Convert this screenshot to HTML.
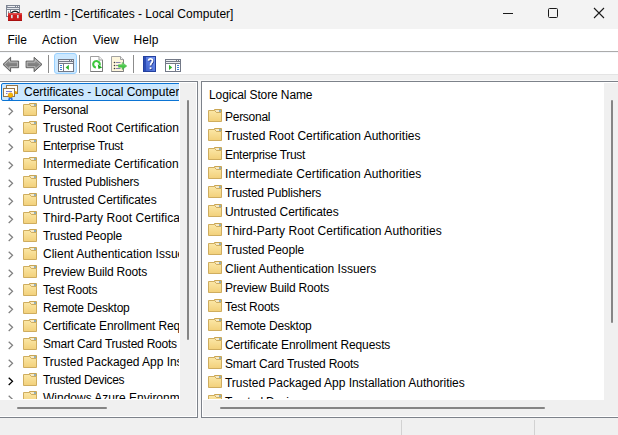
<!DOCTYPE html><html><head><meta charset="utf-8"><style>
*{box-sizing:border-box;margin:0;padding:0}
html,body{width:618px;height:435px;overflow:hidden;background:#f0f0f0;font-family:"Liberation Sans",sans-serif;font-size:12px;color:#000}
.a{position:absolute}
.t{position:absolute;white-space:nowrap;line-height:16px;height:16px}
svg{display:block}
</style></head><body>

<div class="a" style="left:0;top:0;width:618px;height:29px;background:#f3f3f3"></div>
<svg class="a" style="left:5px;top:4px" width="18" height="18" viewBox="0 0 18 18">
<rect x="1.5" y="1.5" width="13" height="11" fill="#fff" stroke="#7d8593"/>
<rect x="2" y="2" width="12" height="4" fill="#7d8593"/>
<path d="M2.5 2.5h7.5M11 2.5h1M13 2.5h1" stroke="#eef0f4" stroke-width="1"/>
<path d="M2 4.5h12" stroke="#e4e7ec" stroke-width="1"/>
<rect x="5" y="5" width="1" height="7" fill="#7d8593"/>
<rect x="3" y="7.5" width="1.2" height="1.2" fill="#555"/>
<path d="M6.2 9 Q10 5.6 13.8 9" fill="none" stroke="#1e1e1e" stroke-width="1.5"/>
<rect x="3" y="9" width="14" height="8" rx="0.6" fill="#cc1c1c"/>
<rect x="3" y="9" width="14" height="1.6" fill="#e14b4b"/>
<rect x="3" y="16" width="14" height="1" fill="#a81010"/>
<rect x="6" y="11" width="1.7" height="3.2" fill="#d5dde0"/><rect x="12" y="11" width="1.7" height="3.2" fill="#d5dde0"/>
</svg>
<div class="t" style="left:28px;top:6px">certlm - [Certificates - Local Computer]</div>
<div class="a" style="left:503px;top:13px;width:10px;height:1px;background:#1a1a1a"></div>
<div class="a" style="left:548px;top:8px;width:10px;height:10px;border:1px solid #1a1a1a;border-radius:1.5px"></div>
<svg class="a" style="left:593px;top:7px" width="12" height="12" viewBox="0 0 12 12"><path d="M1 1L11 11M11 1L1 11" stroke="#1a1a1a" stroke-width="1.1"/></svg>
<div class="a" style="left:0;top:29px;width:618px;height:22px;background:#fff"></div>
<div class="a" style="left:0;top:51px;width:618px;height:1px;background:#ababab"></div>
<div class="t" style="left:7.5px;top:32px;letter-spacing:0px">File</div>
<div class="t" style="left:42px;top:32px;letter-spacing:0.3px">Action</div>
<div class="t" style="left:93px;top:32px;letter-spacing:0px">View</div>
<div class="t" style="left:133.5px;top:32px;letter-spacing:0.1px">Help</div>
<div class="a" style="left:0;top:52px;width:618px;height:22px;background:#fff"></div>
<svg class="a" style="left:2px;top:56px" width="18" height="17" viewBox="0 0 18 17"><defs><linearGradient id="ag" x1="0" y1="0" x2="0" y2="1"><stop offset="0" stop-color="#a8a8a8"/><stop offset="0.55" stop-color="#7c7c7c"/><stop offset="1" stop-color="#a0a0a0"/></linearGradient></defs>
<path d="M1 8.4L8.6 1.3V5.1H16.6V11.7H8.6V15.7Z" fill="url(#ag)" stroke="#5f5f5f" stroke-width="1" stroke-linejoin="round"/><path d="M2.6 8.4L7.6 3.7V6.1H15.6V10.7H7.6V13.2Z" fill="none" stroke="#cfcfcf" stroke-width="0.7" stroke-linejoin="round"/></svg>
<svg class="a" style="left:25px;top:56px" width="18" height="17" viewBox="0 0 18 17">
<path d="M17 8.4L9.1 1.3V5.1H1.1V11.7H9.1V15.7Z" fill="url(#ag)" stroke="#5f5f5f" stroke-width="1" stroke-linejoin="round"/><path d="M15.4 8.4L10.1 3.7V6.1H2.1V10.7H10.1V13.2Z" fill="none" stroke="#cfcfcf" stroke-width="0.7" stroke-linejoin="round"/></svg>
<div class="a" style="left:48px;top:55px;width:1px;height:18px;background:#8c8c8c"></div>
<div class="a" style="left:79px;top:55px;width:1px;height:18px;background:#8c8c8c"></div>
<div class="a" style="left:133px;top:55px;width:1px;height:18px;background:#8c8c8c"></div>
<div class="a" style="left:54px;top:53px;width:23px;height:21px;background:#cce8ff;border:1px solid #99d1ff;border-radius:3px"></div>
<svg class="a" style="left:58px;top:59px" width="16" height="13" viewBox="0 0 16 13">
<rect x="0" y="0" width="16" height="13" fill="#737987"/>
<rect x="1" y="5" width="14" height="7" fill="#fff"/>
<path d="M1 1.5h10M12 1.5h1M14 1.5h1" stroke="#eceef2" stroke-width="1"/>
<path d="M1 3.5h14" stroke="#eceef2" stroke-width="1"/>
<rect x="5" y="5" width="1" height="7" fill="#737987"/>
<path d="M2 6.5h2M2 8.5h2M2 10.5h2" stroke="#3b7fd6" stroke-width="1"/>
<path d="M7.6 8.4L10.9 5.8V11Z" fill="#2fb52f"/>
</svg>
<svg class="a" style="left:165px;top:59px" width="16" height="13" viewBox="0 0 16 13">
<rect x="0" y="0" width="16" height="13" fill="#737987"/>
<rect x="1" y="5" width="14" height="7" fill="#fff"/>
<path d="M1 1.5h10M12 1.5h1M14 1.5h1" stroke="#eceef2" stroke-width="1"/>
<path d="M1 3.5h14" stroke="#eceef2" stroke-width="1"/>
<rect x="10" y="5" width="1" height="7" fill="#737987"/>
<path d="M12 6.5h2M12 8.5h2M12 10.5h2" stroke="#3b7fd6" stroke-width="1"/>
<path d="M7.2 8.4L4 5.8V11Z" fill="#2fb52f"/>
</svg>
<svg class="a" style="left:90px;top:56px" width="14" height="16" viewBox="0 0 14 16">
<path d="M0.5 0.5H9L12.5 4V15.5H0.5Z" fill="#fff" stroke="#a0a0a0"/><path d="M0.5 15.5H12.5V4" fill="none" stroke="#7a7a7a"/><path d="M9 0.5V4H12.5" fill="#f2f2f2" stroke="#a0a0a0"/>
<path d="M5.9 11.55A3.3 3.3 0 1 1 9.6 9.4" fill="none" stroke="#3cc83c" stroke-width="2.1"/>
<path d="M7.8 8.6L12.2 11.4L8.5 13Z" fill="#1aa81a"/>
</svg>
<svg class="a" style="left:111px;top:56px" width="17" height="16" viewBox="0 0 17 16"><defs><linearGradient id="eg" x1="0" y1="0" x2="0" y2="1"><stop offset="0" stop-color="#8ee88e"/><stop offset="0.5" stop-color="#49c949"/><stop offset="1" stop-color="#3cb83c"/></linearGradient></defs>
<path d="M0.5 0.5H9.5L12.5 3.5V15.5H0.5Z" fill="#fdf6dc" stroke="#a3a3a3"/><path d="M0.5 15.5H12.5V3.5" fill="none" stroke="#808080"/><path d="M9.5 0.5V3.5H12.5" fill="#f0f0f0" stroke="#a3a3a3"/>
<circle cx="3.5" cy="6.5" r="0.8" fill="#3a3a3a"/><circle cx="3.5" cy="9.5" r="0.8" fill="#3a3a3a"/><circle cx="3.5" cy="12.5" r="0.8" fill="#3a3a3a"/>
<path d="M5 6.5h4.5M5 9.5h4.5M5 12.5h4.5" stroke="#8585ad" stroke-width="1"/>
<path d="M7.5 8.7H11.2V6.4L15.8 10L11.2 13.6V11.3H7.5Z" fill="url(#eg)" stroke="#43b043" stroke-width="0.5"/>
</svg>
<svg class="a" style="left:143px;top:56px" width="13" height="16" viewBox="0 0 13 16"><defs><linearGradient id="hg" x1="1" y1="0" x2="0" y2="1"><stop offset="0" stop-color="#7495f0"/><stop offset="1" stop-color="#3e60cc"/></linearGradient></defs>
<rect x="0" y="0" width="13" height="16" fill="#23409e"/>
<rect x="3" y="1" width="9" height="14" fill="url(#hg)"/>
<rect x="1" y="1" width="2" height="14" fill="#2c4cb4"/>
<path d="M5.6 4.8Q5.7 2.9 7.6 2.9Q9.6 2.9 9.6 4.7Q9.6 5.9 8.5 6.8Q7.6 7.6 7.6 9.6" fill="none" stroke="#1c2f80" stroke-width="1.9" transform="translate(0.6,0.6)"/><rect x="7.3" y="11.9" width="1.9" height="1.9" fill="#1c2f80"/><path d="M5.6 4.8Q5.7 2.9 7.6 2.9Q9.6 2.9 9.6 4.7Q9.6 5.9 8.5 6.8Q7.6 7.6 7.6 9.6" fill="none" stroke="#fff" stroke-width="1.8"/><rect x="6.7" y="11.3" width="1.8" height="1.8" fill="#fff"/>
</svg>
<div class="a" style="left:0;top:52px;width:618px;height:1px;background:#f4f7fb"></div>
<div class="a" style="left:0;top:74px;width:618px;height:1px;background:#e4e4e4"></div>
<div class="a" style="left:0;top:80px;width:618px;height:1px;background:#f9f9f9"></div>
<div class="a" style="left:-1px;top:81px;width:199px;height:337px;border:1px solid #7d828a;background:#fff"></div>
<div class="a" style="left:201px;top:81px;width:430px;height:337px;border:1px solid #7d828a;background:#fff"></div>
<div class="a" style="left:198px;top:81px;width:3px;height:337px;background:#f5f5f5"></div>
<div class="a" style="left:1px;top:83px;width:178px;height:316px;overflow:hidden;background:#fff">
<div class="a" style="left:0;top:0;width:240px;height:18px;background:#cce8ff;border:1px solid #0b74d4;border-radius:2px"></div>
<svg class="a" style="left:2px;top:1px" width="17" height="17" viewBox="0 0 17 17">
<rect x="3.5" y="1.5" width="11" height="8" fill="#fffdf7" stroke="#957549"/>
<circle cx="12.5" cy="8.5" r="1.6" fill="#f0a800"/>
<rect x="0.5" y="4.5" width="11" height="8" fill="#fffdf7" stroke="#957549"/>
<path d="M3 7.5h6M3 9.5h1.5" stroke="#7b7bd0" stroke-width="1"/>
<path d="M6 12.5L5.2 16H6.8L7.5 14.5L8.2 16H9.8L9 12.5Z" fill="#2a6ae0"/>
<circle cx="7.5" cy="11.2" r="2.3" fill="#f5b800" stroke="#e08c00" stroke-width="0.7"/>
</svg>
<div class="t" style="left:23px;top:1px">Certificates - Local Computer</div>
<div class="a" style="left:6px;top:23px"><svg width="8" height="11" viewBox="0 0 8 11"><path d="M1.7 1.7L5.5 5.35L1.7 9" fill="none" stroke="#808080" stroke-width="1.3"/></svg></div>
<div class="a" style="left:22px;top:20px"><svg width="15" height="14" viewBox="0 0 15 14"><defs><linearGradient id="fgt0" x1="0" y1="0" x2="0" y2="1"><stop offset="0" stop-color="#fbe7a6"/><stop offset="1" stop-color="#f2d07a"/></linearGradient></defs><path d="M6.5 0.5h7v3h-7z" fill="#efd58f" stroke="#c9a552"/><path d="M7.5 1.5h3.5v1h-3.5z" fill="#fff"/><path d="M11 1.5h2v1h-2z" fill="#3b8be0"/><path d="M0.5 1.5h6l2 2h5v9h-13z" fill="url(#fgt0)" stroke="#cfad5f"/></svg></div>
<div class="t" style="left:42px;top:19px;letter-spacing:-0.271px">Personal</div>
<div class="a" style="left:6px;top:41px"><svg width="8" height="11" viewBox="0 0 8 11"><path d="M1.7 1.7L5.5 5.35L1.7 9" fill="none" stroke="#808080" stroke-width="1.3"/></svg></div>
<div class="a" style="left:22px;top:38px"><svg width="15" height="14" viewBox="0 0 15 14"><defs><linearGradient id="fgt1" x1="0" y1="0" x2="0" y2="1"><stop offset="0" stop-color="#fbe7a6"/><stop offset="1" stop-color="#f2d07a"/></linearGradient></defs><path d="M6.5 0.5h7v3h-7z" fill="#efd58f" stroke="#c9a552"/><path d="M7.5 1.5h3.5v1h-3.5z" fill="#fff"/><path d="M11 1.5h2v1h-2z" fill="#3b8be0"/><path d="M0.5 1.5h6l2 2h5v9h-13z" fill="url(#fgt1)" stroke="#cfad5f"/></svg></div>
<div class="t" style="left:42px;top:37px;letter-spacing:0.014px">Trusted Root Certification Authorities</div>
<div class="a" style="left:6px;top:59px"><svg width="8" height="11" viewBox="0 0 8 11"><path d="M1.7 1.7L5.5 5.35L1.7 9" fill="none" stroke="#808080" stroke-width="1.3"/></svg></div>
<div class="a" style="left:22px;top:56px"><svg width="15" height="14" viewBox="0 0 15 14"><defs><linearGradient id="fgt2" x1="0" y1="0" x2="0" y2="1"><stop offset="0" stop-color="#fbe7a6"/><stop offset="1" stop-color="#f2d07a"/></linearGradient></defs><path d="M6.5 0.5h7v3h-7z" fill="#efd58f" stroke="#c9a552"/><path d="M7.5 1.5h3.5v1h-3.5z" fill="#fff"/><path d="M11 1.5h2v1h-2z" fill="#3b8be0"/><path d="M0.5 1.5h6l2 2h5v9h-13z" fill="url(#fgt2)" stroke="#cfad5f"/></svg></div>
<div class="t" style="left:42px;top:55px;letter-spacing:-0.287px">Enterprise Trust</div>
<div class="a" style="left:6px;top:77px"><svg width="8" height="11" viewBox="0 0 8 11"><path d="M1.7 1.7L5.5 5.35L1.7 9" fill="none" stroke="#808080" stroke-width="1.3"/></svg></div>
<div class="a" style="left:22px;top:74px"><svg width="15" height="14" viewBox="0 0 15 14"><defs><linearGradient id="fgt3" x1="0" y1="0" x2="0" y2="1"><stop offset="0" stop-color="#fbe7a6"/><stop offset="1" stop-color="#f2d07a"/></linearGradient></defs><path d="M6.5 0.5h7v3h-7z" fill="#efd58f" stroke="#c9a552"/><path d="M7.5 1.5h3.5v1h-3.5z" fill="#fff"/><path d="M11 1.5h2v1h-2z" fill="#3b8be0"/><path d="M0.5 1.5h6l2 2h5v9h-13z" fill="url(#fgt3)" stroke="#cfad5f"/></svg></div>
<div class="t" style="left:42px;top:73px;letter-spacing:0.095px">Intermediate Certification Authorities</div>
<div class="a" style="left:6px;top:95px"><svg width="8" height="11" viewBox="0 0 8 11"><path d="M1.7 1.7L5.5 5.35L1.7 9" fill="none" stroke="#808080" stroke-width="1.3"/></svg></div>
<div class="a" style="left:22px;top:92px"><svg width="15" height="14" viewBox="0 0 15 14"><defs><linearGradient id="fgt4" x1="0" y1="0" x2="0" y2="1"><stop offset="0" stop-color="#fbe7a6"/><stop offset="1" stop-color="#f2d07a"/></linearGradient></defs><path d="M6.5 0.5h7v3h-7z" fill="#efd58f" stroke="#c9a552"/><path d="M7.5 1.5h3.5v1h-3.5z" fill="#fff"/><path d="M11 1.5h2v1h-2z" fill="#3b8be0"/><path d="M0.5 1.5h6l2 2h5v9h-13z" fill="url(#fgt4)" stroke="#cfad5f"/></svg></div>
<div class="t" style="left:42px;top:91px;letter-spacing:-0.2px">Trusted Publishers</div>
<div class="a" style="left:6px;top:113px"><svg width="8" height="11" viewBox="0 0 8 11"><path d="M1.7 1.7L5.5 5.35L1.7 9" fill="none" stroke="#808080" stroke-width="1.3"/></svg></div>
<div class="a" style="left:22px;top:110px"><svg width="15" height="14" viewBox="0 0 15 14"><defs><linearGradient id="fgt5" x1="0" y1="0" x2="0" y2="1"><stop offset="0" stop-color="#fbe7a6"/><stop offset="1" stop-color="#f2d07a"/></linearGradient></defs><path d="M6.5 0.5h7v3h-7z" fill="#efd58f" stroke="#c9a552"/><path d="M7.5 1.5h3.5v1h-3.5z" fill="#fff"/><path d="M11 1.5h2v1h-2z" fill="#3b8be0"/><path d="M0.5 1.5h6l2 2h5v9h-13z" fill="url(#fgt5)" stroke="#cfad5f"/></svg></div>
<div class="t" style="left:42px;top:109px;letter-spacing:-0.081px">Untrusted Certificates</div>
<div class="a" style="left:6px;top:131px"><svg width="8" height="11" viewBox="0 0 8 11"><path d="M1.7 1.7L5.5 5.35L1.7 9" fill="none" stroke="#808080" stroke-width="1.3"/></svg></div>
<div class="a" style="left:22px;top:128px"><svg width="15" height="14" viewBox="0 0 15 14"><defs><linearGradient id="fgt6" x1="0" y1="0" x2="0" y2="1"><stop offset="0" stop-color="#fbe7a6"/><stop offset="1" stop-color="#f2d07a"/></linearGradient></defs><path d="M6.5 0.5h7v3h-7z" fill="#efd58f" stroke="#c9a552"/><path d="M7.5 1.5h3.5v1h-3.5z" fill="#fff"/><path d="M11 1.5h2v1h-2z" fill="#3b8be0"/><path d="M0.5 1.5h6l2 2h5v9h-13z" fill="url(#fgt6)" stroke="#cfad5f"/></svg></div>
<div class="t" style="left:42px;top:127px;letter-spacing:0.063px">Third-Party Root Certification Authorities</div>
<div class="a" style="left:6px;top:149px"><svg width="8" height="11" viewBox="0 0 8 11"><path d="M1.7 1.7L5.5 5.35L1.7 9" fill="none" stroke="#808080" stroke-width="1.3"/></svg></div>
<div class="a" style="left:22px;top:146px"><svg width="15" height="14" viewBox="0 0 15 14"><defs><linearGradient id="fgt7" x1="0" y1="0" x2="0" y2="1"><stop offset="0" stop-color="#fbe7a6"/><stop offset="1" stop-color="#f2d07a"/></linearGradient></defs><path d="M6.5 0.5h7v3h-7z" fill="#efd58f" stroke="#c9a552"/><path d="M7.5 1.5h3.5v1h-3.5z" fill="#fff"/><path d="M11 1.5h2v1h-2z" fill="#3b8be0"/><path d="M0.5 1.5h6l2 2h5v9h-13z" fill="url(#fgt7)" stroke="#cfad5f"/></svg></div>
<div class="t" style="left:42px;top:145px;letter-spacing:-0.138px">Trusted People</div>
<div class="a" style="left:6px;top:167px"><svg width="8" height="11" viewBox="0 0 8 11"><path d="M1.7 1.7L5.5 5.35L1.7 9" fill="none" stroke="#808080" stroke-width="1.3"/></svg></div>
<div class="a" style="left:22px;top:164px"><svg width="15" height="14" viewBox="0 0 15 14"><defs><linearGradient id="fgt8" x1="0" y1="0" x2="0" y2="1"><stop offset="0" stop-color="#fbe7a6"/><stop offset="1" stop-color="#f2d07a"/></linearGradient></defs><path d="M6.5 0.5h7v3h-7z" fill="#efd58f" stroke="#c9a552"/><path d="M7.5 1.5h3.5v1h-3.5z" fill="#fff"/><path d="M11 1.5h2v1h-2z" fill="#3b8be0"/><path d="M0.5 1.5h6l2 2h5v9h-13z" fill="url(#fgt8)" stroke="#cfad5f"/></svg></div>
<div class="t" style="left:42px;top:163px;letter-spacing:-0.007px">Client Authentication Issuers</div>
<div class="a" style="left:6px;top:185px"><svg width="8" height="11" viewBox="0 0 8 11"><path d="M1.7 1.7L5.5 5.35L1.7 9" fill="none" stroke="#808080" stroke-width="1.3"/></svg></div>
<div class="a" style="left:22px;top:182px"><svg width="15" height="14" viewBox="0 0 15 14"><defs><linearGradient id="fgt9" x1="0" y1="0" x2="0" y2="1"><stop offset="0" stop-color="#fbe7a6"/><stop offset="1" stop-color="#f2d07a"/></linearGradient></defs><path d="M6.5 0.5h7v3h-7z" fill="#efd58f" stroke="#c9a552"/><path d="M7.5 1.5h3.5v1h-3.5z" fill="#fff"/><path d="M11 1.5h2v1h-2z" fill="#3b8be0"/><path d="M0.5 1.5h6l2 2h5v9h-13z" fill="url(#fgt9)" stroke="#cfad5f"/></svg></div>
<div class="t" style="left:42px;top:181px;letter-spacing:-0.172px">Preview Build Roots</div>
<div class="a" style="left:6px;top:203px"><svg width="8" height="11" viewBox="0 0 8 11"><path d="M1.7 1.7L5.5 5.35L1.7 9" fill="none" stroke="#808080" stroke-width="1.3"/></svg></div>
<div class="a" style="left:22px;top:200px"><svg width="15" height="14" viewBox="0 0 15 14"><defs><linearGradient id="fgt10" x1="0" y1="0" x2="0" y2="1"><stop offset="0" stop-color="#fbe7a6"/><stop offset="1" stop-color="#f2d07a"/></linearGradient></defs><path d="M6.5 0.5h7v3h-7z" fill="#efd58f" stroke="#c9a552"/><path d="M7.5 1.5h3.5v1h-3.5z" fill="#fff"/><path d="M11 1.5h2v1h-2z" fill="#3b8be0"/><path d="M0.5 1.5h6l2 2h5v9h-13z" fill="url(#fgt10)" stroke="#cfad5f"/></svg></div>
<div class="t" style="left:42px;top:199px;letter-spacing:-0.256px">Test Roots</div>
<div class="a" style="left:6px;top:221px"><svg width="8" height="11" viewBox="0 0 8 11"><path d="M1.7 1.7L5.5 5.35L1.7 9" fill="none" stroke="#808080" stroke-width="1.3"/></svg></div>
<div class="a" style="left:22px;top:218px"><svg width="15" height="14" viewBox="0 0 15 14"><defs><linearGradient id="fgt11" x1="0" y1="0" x2="0" y2="1"><stop offset="0" stop-color="#fbe7a6"/><stop offset="1" stop-color="#f2d07a"/></linearGradient></defs><path d="M6.5 0.5h7v3h-7z" fill="#efd58f" stroke="#c9a552"/><path d="M7.5 1.5h3.5v1h-3.5z" fill="#fff"/><path d="M11 1.5h2v1h-2z" fill="#3b8be0"/><path d="M0.5 1.5h6l2 2h5v9h-13z" fill="url(#fgt11)" stroke="#cfad5f"/></svg></div>
<div class="t" style="left:42px;top:217px;letter-spacing:-0.2px">Remote Desktop</div>
<div class="a" style="left:6px;top:239px"><svg width="8" height="11" viewBox="0 0 8 11"><path d="M1.7 1.7L5.5 5.35L1.7 9" fill="none" stroke="#808080" stroke-width="1.3"/></svg></div>
<div class="a" style="left:22px;top:236px"><svg width="15" height="14" viewBox="0 0 15 14"><defs><linearGradient id="fgt12" x1="0" y1="0" x2="0" y2="1"><stop offset="0" stop-color="#fbe7a6"/><stop offset="1" stop-color="#f2d07a"/></linearGradient></defs><path d="M6.5 0.5h7v3h-7z" fill="#efd58f" stroke="#c9a552"/><path d="M7.5 1.5h3.5v1h-3.5z" fill="#fff"/><path d="M11 1.5h2v1h-2z" fill="#3b8be0"/><path d="M0.5 1.5h6l2 2h5v9h-13z" fill="url(#fgt12)" stroke="#cfad5f"/></svg></div>
<div class="t" style="left:42px;top:235px;letter-spacing:-0.113px">Certificate Enrollment Requests</div>
<div class="a" style="left:6px;top:257px"><svg width="8" height="11" viewBox="0 0 8 11"><path d="M1.7 1.7L5.5 5.35L1.7 9" fill="none" stroke="#808080" stroke-width="1.3"/></svg></div>
<div class="a" style="left:22px;top:254px"><svg width="15" height="14" viewBox="0 0 15 14"><defs><linearGradient id="fgt13" x1="0" y1="0" x2="0" y2="1"><stop offset="0" stop-color="#fbe7a6"/><stop offset="1" stop-color="#f2d07a"/></linearGradient></defs><path d="M6.5 0.5h7v3h-7z" fill="#efd58f" stroke="#c9a552"/><path d="M7.5 1.5h3.5v1h-3.5z" fill="#fff"/><path d="M11 1.5h2v1h-2z" fill="#3b8be0"/><path d="M0.5 1.5h6l2 2h5v9h-13z" fill="url(#fgt13)" stroke="#cfad5f"/></svg></div>
<div class="t" style="left:42px;top:253px;letter-spacing:-0.23px">Smart Card Trusted Roots</div>
<div class="a" style="left:6px;top:275px"><svg width="8" height="11" viewBox="0 0 8 11"><path d="M1.7 1.7L5.5 5.35L1.7 9" fill="none" stroke="#808080" stroke-width="1.3"/></svg></div>
<div class="a" style="left:22px;top:272px"><svg width="15" height="14" viewBox="0 0 15 14"><defs><linearGradient id="fgt14" x1="0" y1="0" x2="0" y2="1"><stop offset="0" stop-color="#fbe7a6"/><stop offset="1" stop-color="#f2d07a"/></linearGradient></defs><path d="M6.5 0.5h7v3h-7z" fill="#efd58f" stroke="#c9a552"/><path d="M7.5 1.5h3.5v1h-3.5z" fill="#fff"/><path d="M11 1.5h2v1h-2z" fill="#3b8be0"/><path d="M0.5 1.5h6l2 2h5v9h-13z" fill="url(#fgt14)" stroke="#cfad5f"/></svg></div>
<div class="t" style="left:42px;top:271px;letter-spacing:-0.03px">Trusted Packaged App Installation Authorities</div>
<div class="a" style="left:6px;top:293px"><svg width="8" height="11" viewBox="0 0 8 11"><path d="M1.7 1.7L5.5 5.35L1.7 9" fill="none" stroke="#000" stroke-width="1.3"/></svg></div>
<div class="a" style="left:22px;top:290px"><svg width="15" height="14" viewBox="0 0 15 14"><defs><linearGradient id="fgt15" x1="0" y1="0" x2="0" y2="1"><stop offset="0" stop-color="#fbe7a6"/><stop offset="1" stop-color="#f2d07a"/></linearGradient></defs><path d="M6.5 0.5h7v3h-7z" fill="#efd58f" stroke="#c9a552"/><path d="M7.5 1.5h3.5v1h-3.5z" fill="#fff"/><path d="M11 1.5h2v1h-2z" fill="#3b8be0"/><path d="M0.5 1.5h6l2 2h5v9h-13z" fill="url(#fgt15)" stroke="#cfad5f"/></svg></div>
<div class="t" style="left:42px;top:289px;letter-spacing:-0.336px">Trusted Devices</div>
<div class="a" style="left:6px;top:311px"><svg width="8" height="11" viewBox="0 0 8 11"><path d="M1.7 1.7L5.5 5.35L1.7 9" fill="none" stroke="#808080" stroke-width="1.3"/></svg></div>
<div class="a" style="left:22px;top:308px"><svg width="15" height="14" viewBox="0 0 15 14"><defs><linearGradient id="fgt16" x1="0" y1="0" x2="0" y2="1"><stop offset="0" stop-color="#fbe7a6"/><stop offset="1" stop-color="#f2d07a"/></linearGradient></defs><path d="M6.5 0.5h7v3h-7z" fill="#efd58f" stroke="#c9a552"/><path d="M7.5 1.5h3.5v1h-3.5z" fill="#fff"/><path d="M11 1.5h2v1h-2z" fill="#3b8be0"/><path d="M0.5 1.5h6l2 2h5v9h-13z" fill="url(#fgt16)" stroke="#cfad5f"/></svg></div>
<div class="t" style="left:42px;top:307px;letter-spacing:0.0px">Windows Azure Environment Roots</div>
</div>
<div class="a" style="left:180px;top:83px;width:16px;height:317px;background:#f0f0f0"></div>
<div class="a" style="left:187px;top:100px;width:2px;height:240px;background:#858585;border-radius:1px"></div>
<div class="a" style="left:0px;top:400px;width:196px;height:16px;background:#f0f0f0"></div>
<div class="a" style="left:17px;top:407px;width:90px;height:2px;background:#858585;border-radius:1px"></div>
<div class="a" style="left:203px;top:83px;width:401px;height:316px;overflow:hidden;background:#fff">
<div class="t" style="left:6px;top:4px;letter-spacing:-0.11px">Logical Store Name</div>
<div class="a" style="left:5px;top:26px"><svg width="15" height="14" viewBox="0 0 15 14"><defs><linearGradient id="fgl0" x1="0" y1="0" x2="0" y2="1"><stop offset="0" stop-color="#fbe7a6"/><stop offset="1" stop-color="#f2d07a"/></linearGradient></defs><path d="M6.5 0.5h7v3h-7z" fill="#efd58f" stroke="#c9a552"/><path d="M7.5 1.5h3.5v1h-3.5z" fill="#fff"/><path d="M11 1.5h2v1h-2z" fill="#3b8be0"/><path d="M0.5 1.5h6l2 2h5v9h-13z" fill="url(#fgl0)" stroke="#cfad5f"/></svg></div>
<div class="t" style="left:22px;top:26px;letter-spacing:-0.271px">Personal</div>
<div class="a" style="left:5px;top:45px"><svg width="15" height="14" viewBox="0 0 15 14"><defs><linearGradient id="fgl1" x1="0" y1="0" x2="0" y2="1"><stop offset="0" stop-color="#fbe7a6"/><stop offset="1" stop-color="#f2d07a"/></linearGradient></defs><path d="M6.5 0.5h7v3h-7z" fill="#efd58f" stroke="#c9a552"/><path d="M7.5 1.5h3.5v1h-3.5z" fill="#fff"/><path d="M11 1.5h2v1h-2z" fill="#3b8be0"/><path d="M0.5 1.5h6l2 2h5v9h-13z" fill="url(#fgl1)" stroke="#cfad5f"/></svg></div>
<div class="t" style="left:22px;top:45px;letter-spacing:0.014px">Trusted Root Certification Authorities</div>
<div class="a" style="left:5px;top:64px"><svg width="15" height="14" viewBox="0 0 15 14"><defs><linearGradient id="fgl2" x1="0" y1="0" x2="0" y2="1"><stop offset="0" stop-color="#fbe7a6"/><stop offset="1" stop-color="#f2d07a"/></linearGradient></defs><path d="M6.5 0.5h7v3h-7z" fill="#efd58f" stroke="#c9a552"/><path d="M7.5 1.5h3.5v1h-3.5z" fill="#fff"/><path d="M11 1.5h2v1h-2z" fill="#3b8be0"/><path d="M0.5 1.5h6l2 2h5v9h-13z" fill="url(#fgl2)" stroke="#cfad5f"/></svg></div>
<div class="t" style="left:22px;top:64px;letter-spacing:-0.287px">Enterprise Trust</div>
<div class="a" style="left:5px;top:83px"><svg width="15" height="14" viewBox="0 0 15 14"><defs><linearGradient id="fgl3" x1="0" y1="0" x2="0" y2="1"><stop offset="0" stop-color="#fbe7a6"/><stop offset="1" stop-color="#f2d07a"/></linearGradient></defs><path d="M6.5 0.5h7v3h-7z" fill="#efd58f" stroke="#c9a552"/><path d="M7.5 1.5h3.5v1h-3.5z" fill="#fff"/><path d="M11 1.5h2v1h-2z" fill="#3b8be0"/><path d="M0.5 1.5h6l2 2h5v9h-13z" fill="url(#fgl3)" stroke="#cfad5f"/></svg></div>
<div class="t" style="left:22px;top:83px;letter-spacing:0.095px">Intermediate Certification Authorities</div>
<div class="a" style="left:5px;top:102px"><svg width="15" height="14" viewBox="0 0 15 14"><defs><linearGradient id="fgl4" x1="0" y1="0" x2="0" y2="1"><stop offset="0" stop-color="#fbe7a6"/><stop offset="1" stop-color="#f2d07a"/></linearGradient></defs><path d="M6.5 0.5h7v3h-7z" fill="#efd58f" stroke="#c9a552"/><path d="M7.5 1.5h3.5v1h-3.5z" fill="#fff"/><path d="M11 1.5h2v1h-2z" fill="#3b8be0"/><path d="M0.5 1.5h6l2 2h5v9h-13z" fill="url(#fgl4)" stroke="#cfad5f"/></svg></div>
<div class="t" style="left:22px;top:102px;letter-spacing:-0.2px">Trusted Publishers</div>
<div class="a" style="left:5px;top:121px"><svg width="15" height="14" viewBox="0 0 15 14"><defs><linearGradient id="fgl5" x1="0" y1="0" x2="0" y2="1"><stop offset="0" stop-color="#fbe7a6"/><stop offset="1" stop-color="#f2d07a"/></linearGradient></defs><path d="M6.5 0.5h7v3h-7z" fill="#efd58f" stroke="#c9a552"/><path d="M7.5 1.5h3.5v1h-3.5z" fill="#fff"/><path d="M11 1.5h2v1h-2z" fill="#3b8be0"/><path d="M0.5 1.5h6l2 2h5v9h-13z" fill="url(#fgl5)" stroke="#cfad5f"/></svg></div>
<div class="t" style="left:22px;top:121px;letter-spacing:-0.081px">Untrusted Certificates</div>
<div class="a" style="left:5px;top:140px"><svg width="15" height="14" viewBox="0 0 15 14"><defs><linearGradient id="fgl6" x1="0" y1="0" x2="0" y2="1"><stop offset="0" stop-color="#fbe7a6"/><stop offset="1" stop-color="#f2d07a"/></linearGradient></defs><path d="M6.5 0.5h7v3h-7z" fill="#efd58f" stroke="#c9a552"/><path d="M7.5 1.5h3.5v1h-3.5z" fill="#fff"/><path d="M11 1.5h2v1h-2z" fill="#3b8be0"/><path d="M0.5 1.5h6l2 2h5v9h-13z" fill="url(#fgl6)" stroke="#cfad5f"/></svg></div>
<div class="t" style="left:22px;top:140px;letter-spacing:0.063px">Third-Party Root Certification Authorities</div>
<div class="a" style="left:5px;top:159px"><svg width="15" height="14" viewBox="0 0 15 14"><defs><linearGradient id="fgl7" x1="0" y1="0" x2="0" y2="1"><stop offset="0" stop-color="#fbe7a6"/><stop offset="1" stop-color="#f2d07a"/></linearGradient></defs><path d="M6.5 0.5h7v3h-7z" fill="#efd58f" stroke="#c9a552"/><path d="M7.5 1.5h3.5v1h-3.5z" fill="#fff"/><path d="M11 1.5h2v1h-2z" fill="#3b8be0"/><path d="M0.5 1.5h6l2 2h5v9h-13z" fill="url(#fgl7)" stroke="#cfad5f"/></svg></div>
<div class="t" style="left:22px;top:159px;letter-spacing:-0.138px">Trusted People</div>
<div class="a" style="left:5px;top:178px"><svg width="15" height="14" viewBox="0 0 15 14"><defs><linearGradient id="fgl8" x1="0" y1="0" x2="0" y2="1"><stop offset="0" stop-color="#fbe7a6"/><stop offset="1" stop-color="#f2d07a"/></linearGradient></defs><path d="M6.5 0.5h7v3h-7z" fill="#efd58f" stroke="#c9a552"/><path d="M7.5 1.5h3.5v1h-3.5z" fill="#fff"/><path d="M11 1.5h2v1h-2z" fill="#3b8be0"/><path d="M0.5 1.5h6l2 2h5v9h-13z" fill="url(#fgl8)" stroke="#cfad5f"/></svg></div>
<div class="t" style="left:22px;top:178px;letter-spacing:-0.007px">Client Authentication Issuers</div>
<div class="a" style="left:5px;top:197px"><svg width="15" height="14" viewBox="0 0 15 14"><defs><linearGradient id="fgl9" x1="0" y1="0" x2="0" y2="1"><stop offset="0" stop-color="#fbe7a6"/><stop offset="1" stop-color="#f2d07a"/></linearGradient></defs><path d="M6.5 0.5h7v3h-7z" fill="#efd58f" stroke="#c9a552"/><path d="M7.5 1.5h3.5v1h-3.5z" fill="#fff"/><path d="M11 1.5h2v1h-2z" fill="#3b8be0"/><path d="M0.5 1.5h6l2 2h5v9h-13z" fill="url(#fgl9)" stroke="#cfad5f"/></svg></div>
<div class="t" style="left:22px;top:197px;letter-spacing:-0.172px">Preview Build Roots</div>
<div class="a" style="left:5px;top:216px"><svg width="15" height="14" viewBox="0 0 15 14"><defs><linearGradient id="fgl10" x1="0" y1="0" x2="0" y2="1"><stop offset="0" stop-color="#fbe7a6"/><stop offset="1" stop-color="#f2d07a"/></linearGradient></defs><path d="M6.5 0.5h7v3h-7z" fill="#efd58f" stroke="#c9a552"/><path d="M7.5 1.5h3.5v1h-3.5z" fill="#fff"/><path d="M11 1.5h2v1h-2z" fill="#3b8be0"/><path d="M0.5 1.5h6l2 2h5v9h-13z" fill="url(#fgl10)" stroke="#cfad5f"/></svg></div>
<div class="t" style="left:22px;top:216px;letter-spacing:-0.256px">Test Roots</div>
<div class="a" style="left:5px;top:235px"><svg width="15" height="14" viewBox="0 0 15 14"><defs><linearGradient id="fgl11" x1="0" y1="0" x2="0" y2="1"><stop offset="0" stop-color="#fbe7a6"/><stop offset="1" stop-color="#f2d07a"/></linearGradient></defs><path d="M6.5 0.5h7v3h-7z" fill="#efd58f" stroke="#c9a552"/><path d="M7.5 1.5h3.5v1h-3.5z" fill="#fff"/><path d="M11 1.5h2v1h-2z" fill="#3b8be0"/><path d="M0.5 1.5h6l2 2h5v9h-13z" fill="url(#fgl11)" stroke="#cfad5f"/></svg></div>
<div class="t" style="left:22px;top:235px;letter-spacing:-0.2px">Remote Desktop</div>
<div class="a" style="left:5px;top:254px"><svg width="15" height="14" viewBox="0 0 15 14"><defs><linearGradient id="fgl12" x1="0" y1="0" x2="0" y2="1"><stop offset="0" stop-color="#fbe7a6"/><stop offset="1" stop-color="#f2d07a"/></linearGradient></defs><path d="M6.5 0.5h7v3h-7z" fill="#efd58f" stroke="#c9a552"/><path d="M7.5 1.5h3.5v1h-3.5z" fill="#fff"/><path d="M11 1.5h2v1h-2z" fill="#3b8be0"/><path d="M0.5 1.5h6l2 2h5v9h-13z" fill="url(#fgl12)" stroke="#cfad5f"/></svg></div>
<div class="t" style="left:22px;top:254px;letter-spacing:-0.113px">Certificate Enrollment Requests</div>
<div class="a" style="left:5px;top:273px"><svg width="15" height="14" viewBox="0 0 15 14"><defs><linearGradient id="fgl13" x1="0" y1="0" x2="0" y2="1"><stop offset="0" stop-color="#fbe7a6"/><stop offset="1" stop-color="#f2d07a"/></linearGradient></defs><path d="M6.5 0.5h7v3h-7z" fill="#efd58f" stroke="#c9a552"/><path d="M7.5 1.5h3.5v1h-3.5z" fill="#fff"/><path d="M11 1.5h2v1h-2z" fill="#3b8be0"/><path d="M0.5 1.5h6l2 2h5v9h-13z" fill="url(#fgl13)" stroke="#cfad5f"/></svg></div>
<div class="t" style="left:22px;top:273px;letter-spacing:-0.23px">Smart Card Trusted Roots</div>
<div class="a" style="left:5px;top:292px"><svg width="15" height="14" viewBox="0 0 15 14"><defs><linearGradient id="fgl14" x1="0" y1="0" x2="0" y2="1"><stop offset="0" stop-color="#fbe7a6"/><stop offset="1" stop-color="#f2d07a"/></linearGradient></defs><path d="M6.5 0.5h7v3h-7z" fill="#efd58f" stroke="#c9a552"/><path d="M7.5 1.5h3.5v1h-3.5z" fill="#fff"/><path d="M11 1.5h2v1h-2z" fill="#3b8be0"/><path d="M0.5 1.5h6l2 2h5v9h-13z" fill="url(#fgl14)" stroke="#cfad5f"/></svg></div>
<div class="t" style="left:22px;top:292px;letter-spacing:-0.03px">Trusted Packaged App Installation Authorities</div>
<div class="a" style="left:5px;top:311px"><svg width="15" height="14" viewBox="0 0 15 14"><defs><linearGradient id="fgl15" x1="0" y1="0" x2="0" y2="1"><stop offset="0" stop-color="#fbe7a6"/><stop offset="1" stop-color="#f2d07a"/></linearGradient></defs><path d="M6.5 0.5h7v3h-7z" fill="#efd58f" stroke="#c9a552"/><path d="M7.5 1.5h3.5v1h-3.5z" fill="#fff"/><path d="M11 1.5h2v1h-2z" fill="#3b8be0"/><path d="M0.5 1.5h6l2 2h5v9h-13z" fill="url(#fgl15)" stroke="#cfad5f"/></svg></div>
<div class="t" style="left:22px;top:311px;letter-spacing:-0.336px">Trusted Devices</div>
</div>
<div class="a" style="left:604px;top:83px;width:14px;height:333px;background:#f0f0f0"></div>
<div class="a" style="left:611px;top:100px;width:2px;height:223px;background:#858585;border-radius:1px"></div>
<div class="a" style="left:203px;top:400px;width:415px;height:16px;background:#f0f0f0"></div>
<div class="a" style="left:220px;top:407px;width:325px;height:2px;background:#858585;border-radius:1px"></div>
<div class="a" style="left:0;top:418px;width:618px;height:17px;background:#f0f0f0"></div>
<div class="a" style="left:401px;top:420px;width:1px;height:15px;background:#d2d2d2"></div>
<div class="a" style="left:534px;top:420px;width:1px;height:15px;background:#d2d2d2"></div>
</body></html>
